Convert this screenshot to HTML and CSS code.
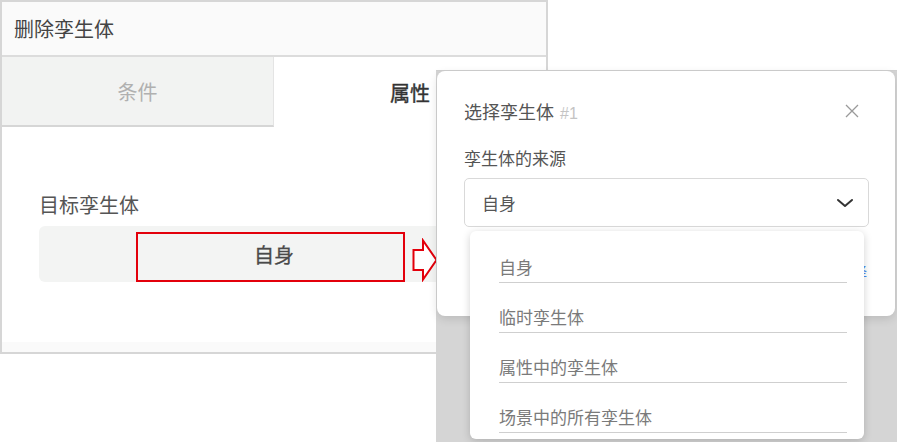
FILE: index.html
```html
<!DOCTYPE html>
<html lang="zh-CN">
<head>
<meta charset="utf-8">
<title>删除孪生体</title>
<link rel="stylesheet" href="styles.css">
</head>
<body>
<div class="canvas">
  <section class="shot shot-left">
    <header class="panel-head">删除孪生体</header>
    <nav class="tabs">
      <div class="tab tab-off">条件</div>
      <div class="tab tab-on">属性</div>
    </nav>
    <div class="panel-body">
      <div class="field-label">目标孪生体</div>
      <div class="field-value">自身</div>
    </div>
    <div class="panel-foot"></div>
    <div class="mark-box"></div>
    <svg class="mark-arrow" width="26" height="44" viewBox="0 0 26 44">
      <path d="M1.5 12 H11 V2.5 L24.5 22 L11 41.5 V32 H1.5 Z" fill="#fff" stroke="#e3000b" stroke-width="2" stroke-linejoin="miter"/>
    </svg>
  </section>

  <section class="shot shot-right">
    <div class="modal">
      <div class="modal-head">
        <div class="modal-title">选择孪生体<span class="modal-num">#1</span></div>
        <svg class="close" width="14" height="14" viewBox="0 0 14 14">
          <path d="M1 1 L13 13 M13 1 L1 13" stroke="#9a9a9a" stroke-width="1.3" fill="none"/>
        </svg>
      </div>
      <div class="modal-label">孪生体的来源</div>
      <div class="select">
        <span>自身</span>
        <svg width="18" height="10" viewBox="0 0 18 10">
          <path d="M2 2 L9 8 L16 2" stroke="#333" stroke-width="2" fill="none" stroke-linecap="round" stroke-linejoin="round"/>
        </svg>
      </div>
      <div class="modal-actions"><span class="link">选择</span></div>
    </div>
    <ul class="dropdown">
      <li>自身</li>
      <li>临时孪生体</li>
      <li>属性中的孪生体</li>
      <li>场景中的所有孪生体</li>
    </ul>
  </section>
</div>
</body>
</html>
```

FILE: styles.css
```css
* { box-sizing: border-box; }
html, body { margin: 0; padding: 0; background: #fff; }
body {
  font-family: "Noto Sans CJK SC", "Noto Sans", sans-serif;
  color: #555;
}
.canvas {
  position: relative;
  width: 897px;
  height: 442px;
  overflow: hidden;
  background: #fff;
}
.shot { position: absolute; }

/* left screenshot */
.shot-left {
  left: 0;
  top: 0;
  width: 548px;
  height: 354px;
  border: 2px solid #d6d6d6;
  display: flex;
  flex-direction: column;
  background: #fff;
}
.panel-head {
  height: 55px;
  flex: none;
  background: #fafafa;
  border-bottom: 2px solid #dcdcdc;
  padding-left: 12px;
  font-size: 20px;
  line-height: 53px;
  color: #444;
}
.tabs {
  height: 70px;
  flex: none;
  display: grid;
  grid-template-columns: 272px 1fr;
}
.tab {
  display: flex;
  align-items: center;
  justify-content: center;
  font-size: 20px;
}
.tab-off {
  background: #f2f3f2;
  color: #b0b0b0;
  border-bottom: 2px solid #d6d6d6;
  border-right: 1px solid #e4e4e4;
}
.tab-on {
  color: #333;
  -webkit-text-stroke: 0.4px #333;
}
.panel-body {
  flex: 1;
  padding: 63px 37px 0 37px;
}
.field-label {
  font-size: 20px;
  line-height: 30px;
  color: #555;
}
.field-value {
  margin-top: 6px;
  height: 56px;
  border-radius: 6px;
  background: #f3f4f3;
  display: flex;
  align-items: center;
  justify-content: center;
  font-size: 20px;
  color: #4a4a4a;
  -webkit-text-stroke: 0.3px #4a4a4a;
}
.panel-foot {
  height: 10px;
  flex: none;
  background: #fafafa;
}
.mark-box {
  position: absolute;
  left: 134px;
  top: 230px;
  width: 269px;
  height: 50px;
  border: 2px solid #e3000b;
}
.mark-arrow {
  position: absolute;
  left: 410px;
  top: 236px;
}

/* right screenshot */
.shot-right {
  left: 436px;
  top: 70px;
  width: 461px;
  height: 372px;
  background: #d5d5d5;
  border-top: 1px solid #d0d0d0;
  padding: 0 2px 0 1px;
}
.modal {
  height: 245px;
  background: #fff;
  border-radius: 8px;
  box-shadow: 0 3px 10px rgba(0, 0, 0, 0.12);
  padding: 29px 26px 0 27px;
}
.modal-head {
  display: flex;
  align-items: center;
  justify-content: space-between;
  height: 24px;
  padding-right: 10px;
}
.modal-title {
  font-size: 18px;
  line-height: 24px;
  color: #555;
}
.modal-num {
  margin-left: 6px;
  font-size: 16px;
  color: #c4c4c4;
  font-family: "Liberation Sans Narrow", "Liberation Sans", sans-serif;
}
.close { margin-top: -3px; }
.modal-label {
  margin-top: 22px;
  font-size: 17px;
  line-height: 24px;
  color: #555;
}
.select {
  margin-top: 8px;
  height: 49px;
  border: 1px solid #d9d9d9;
  border-radius: 5px;
  display: flex;
  align-items: center;
  justify-content: space-between;
  padding: 0 14px 0 17px;
  font-size: 17px;
  color: #555;
}
.modal-actions {
  margin-top: 33px;
  display: flex;
  justify-content: flex-end;
  padding-right: 2px;
  line-height: 24px;
}
.link {
  font-size: 15px;
  color: #4a89f0;
}
.dropdown {
  position: absolute;
  left: 34px;
  top: 160px;
  width: 394px;
  height: 208px;
  margin: 0;
  list-style: none;
  background: #fff;
  border-radius: 6px;
  box-shadow: 0 2px 8px rgba(0, 0, 0, 0.18);
  padding: 2px 17px 6px 29px;
}
.dropdown li {
  height: 50px;
  display: flex;
  align-items: flex-end;
  padding-bottom: 3px;
  border-bottom: 1px solid #cfcfcf;
  font-size: 17px;
  line-height: 24px;
  color: #7a7a7a;
}
```
